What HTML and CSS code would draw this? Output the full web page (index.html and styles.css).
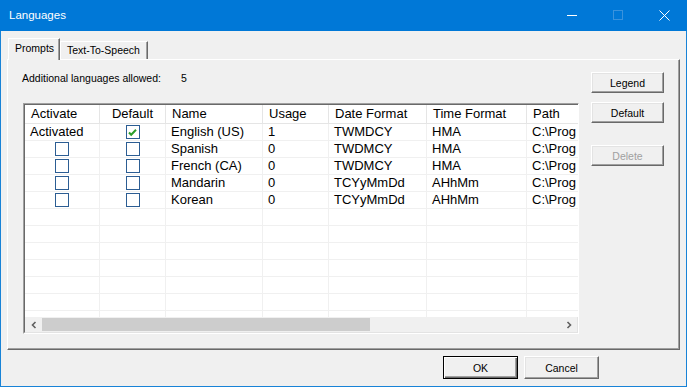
FILE: index.html
```html
<!DOCTYPE html>
<html lang="en">
<head>
    <meta charset="UTF-8">
    <title>Languages</title>
    <link rel="stylesheet" href="styles.css">
</head>
<body>
<div class="window">
    <div class="titlebar">
        <span class="title">Languages</span>
        <div class="caption">
            <span class="cap-btn"><svg width="10" height="10" viewBox="0 0 10 10"><path d="M0 5.5h10" stroke="#fff" stroke-width="1"/></svg></span>
            <span class="cap-btn"><svg width="10" height="10" viewBox="0 0 10 10"><rect x="0.5" y="0.5" width="9" height="9" fill="none" stroke="#3a93dd" stroke-width="1"/></svg></span>
            <span class="cap-btn"><svg width="11" height="11" viewBox="0 0 11 11"><path d="M0.5 0.5l10 10M10.5 0.5l-10 10" stroke="#fff" stroke-width="1"/></svg></span>
        </div>
    </div>

    <div class="client">
        <div class="tabs">
            <div class="tab active">Prompts</div>
            <div class="tab">Text-To-Speech</div>
        </div>

        <div class="panel">
            <div class="panel-main">
                <div class="allowed">
                    <span class="allowed-label">Additional languages allowed:</span>
                    <span class="allowed-count">5</span>
                </div>

                <div class="listview">
                    <div class="grid">
                        <div class="row head">
                            <div class="cell">Activate</div>
                            <div class="cell center">Default</div>
                            <div class="cell">Name</div>
                            <div class="cell">Usage</div>
                            <div class="cell">Date Format</div>
                            <div class="cell">Time Format</div>
                            <div class="cell">Path</div>
                        </div>
                        <div class="row">
                            <div class="cell">Activated</div>
                            <div class="cell center"><span class="check on"><svg width="11" height="11" viewBox="0 0 11 11"><path d="M2 5.5l2.2 2.3L9 2.8" fill="none" stroke="#2a9d2a" stroke-width="2"/></svg></span></div>
                            <div class="cell">English (US)</div>
                            <div class="cell">1</div>
                            <div class="cell">TWMDCY</div>
                            <div class="cell">HMA</div>
                            <div class="cell">C:\Prog</div>
                        </div>
                        <div class="row">
                            <div class="cell center"><span class="check"></span></div>
                            <div class="cell center"><span class="check"></span></div>
                            <div class="cell">Spanish</div>
                            <div class="cell">0</div>
                            <div class="cell">TWDMCY</div>
                            <div class="cell">HMA</div>
                            <div class="cell">C:\Prog</div>
                        </div>
                        <div class="row">
                            <div class="cell center"><span class="check"></span></div>
                            <div class="cell center"><span class="check"></span></div>
                            <div class="cell">French (CA)</div>
                            <div class="cell">0</div>
                            <div class="cell">TWDMCY</div>
                            <div class="cell">HMA</div>
                            <div class="cell">C:\Prog</div>
                        </div>
                        <div class="row">
                            <div class="cell center"><span class="check"></span></div>
                            <div class="cell center"><span class="check"></span></div>
                            <div class="cell">Mandarin</div>
                            <div class="cell">0</div>
                            <div class="cell">TCYyMmDd</div>
                            <div class="cell">AHhMm</div>
                            <div class="cell">C:\Prog</div>
                        </div>
                        <div class="row">
                            <div class="cell center"><span class="check"></span></div>
                            <div class="cell center"><span class="check"></span></div>
                            <div class="cell">Korean</div>
                            <div class="cell">0</div>
                            <div class="cell">TCYyMmDd</div>
                            <div class="cell">AHhMm</div>
                            <div class="cell">C:\Prog</div>
                        </div>
                        <div class="row"><div class="cell"></div><div class="cell"></div><div class="cell"></div><div class="cell"></div><div class="cell"></div><div class="cell"></div><div class="cell"></div></div>
                        <div class="row"><div class="cell"></div><div class="cell"></div><div class="cell"></div><div class="cell"></div><div class="cell"></div><div class="cell"></div><div class="cell"></div></div>
                        <div class="row"><div class="cell"></div><div class="cell"></div><div class="cell"></div><div class="cell"></div><div class="cell"></div><div class="cell"></div><div class="cell"></div></div>
                        <div class="row"><div class="cell"></div><div class="cell"></div><div class="cell"></div><div class="cell"></div><div class="cell"></div><div class="cell"></div><div class="cell"></div></div>
                        <div class="row"><div class="cell"></div><div class="cell"></div><div class="cell"></div><div class="cell"></div><div class="cell"></div><div class="cell"></div><div class="cell"></div></div>
                        <div class="row"><div class="cell"></div><div class="cell"></div><div class="cell"></div><div class="cell"></div><div class="cell"></div><div class="cell"></div><div class="cell"></div></div>
                        <div class="row"><div class="cell"></div><div class="cell"></div><div class="cell"></div><div class="cell"></div><div class="cell"></div><div class="cell"></div><div class="cell"></div></div>
                    </div>

                    <div class="hscroll">
                        <span class="arrow"><svg width="8" height="8" viewBox="0 0 8 8"><path d="M5.5 1L2.5 4l3 3" fill="none" stroke="#606060" stroke-width="1.6"/></svg></span>
                        <div class="track"><div class="thumb" style="width: 328px"></div></div>
                        <span class="arrow"><svg width="8" height="8" viewBox="0 0 8 8"><path d="M2.5 1l3 3-3 3" fill="none" stroke="#606060" stroke-width="1.6"/></svg></span>
                    </div>
                </div>
            </div>

            <div class="side">
                <button class="btn">Legend</button>
                <button class="btn">Default</button>
                <button class="btn disabled gap">Delete</button>
            </div>
        </div>

        <div class="footer">
            <button class="btn big default">OK</button>
            <button class="btn big">Cancel</button>
        </div>
    </div>
</div>
</body>
</html>
```

FILE: styles.css
```css
* {
    box-sizing: border-box;
}
body {
    margin: 0;
    background-color: #f0f0f0;
    font-family: "Liberation Sans", Arial, sans-serif;
    font-size: 10.5px;
    color: #000;
}
.window {
    width: 687px;
    height: 387px;
    border: 1px solid #1883d7;
    border-top: none;
    background-color: #f0f0f0;
    display: flex;
    flex-direction: column;
}
.titlebar {
    height: 31px;
    margin: 0 -1px;
    background-color: #0078d7;
    display: flex;
    align-items: center;
    flex-shrink: 0;
}
.title {
    color: #fff;
    font-size: 11.5px;
    padding-left: 9px;
    flex: 1;
    margin-top: -1px;
}
.caption {
    display: flex;
    height: 30px;
    align-self: flex-start;
}
.cap-btn {
    width: 46px;
    height: 30px;
    display: flex;
    align-items: center;
    justify-content: center;
}
.cap-btn svg {
    display: block;
}

.client {
    flex: 1;
    padding-top: 7px;
}
.tabs {
    display: flex;
    align-items: flex-end;
    height: 21px;
    padding-left: 7px;
    position: relative;
    z-index: 1;
}
.tab {
    height: 18px;
    padding: 0 6px;
    line-height: 17px;
    border-top: 1px solid #fff;
    border-left: 1px solid #fff;
    border-right: 1px solid #696969;
    box-shadow: inset -1px 0 #a0a0a0;
    background-color: #f0f0f0;
}
.tab.active {
    height: 22px;
    width: 52px;
    margin-bottom: -1px;
    line-height: 19px;
    padding-left: 6px;
}
.tab + .tab {
    width: 88px;
}

.panel {
    width: 673px;
    height: 291px;
    margin-left: 6px;
    border-top: 1px solid #fff;
    border-left: 1px solid #fff;
    border-right: 1px solid #696969;
    border-bottom: 1px solid #696969;
    box-shadow: inset -1px -1px #a0a0a0;
    padding: 12px 0 0 15px;
    display: flex;
}
.panel-main {
    width: 556px;
    display: flex;
    flex-direction: column;
}
.allowed {
    height: 13px;
    line-height: 13px;
    display: flex;
}
.allowed-label {
    margin-left: -1px;
    width: 159px;
}

.listview {
    margin-top: 18px;
    height: 231px;
    border-top: 1px solid #a0a0a0;
    border-left: 1px solid #a0a0a0;
    border-right: 1px solid #fff;
    border-bottom: 1px solid #fff;
    display: flex;
    flex-direction: column;
    background-color: #fff;
    font-size: 13px;
}
.grid {
    flex: 1;
    overflow: hidden;
    border-top: 1px solid #696969;
    border-left: 1px solid #696969;
}
.row {
    display: grid;
    grid-template-columns: 75px 66px 97px 66px 98px 100px 51px;
    height: 17px;
    border-bottom: 1px solid #f0f0f0;
}
.row.head {
    height: 19px;
    border-bottom: 1px solid #e5e5e5;
}
.cell {
    border-right: 1px solid #f0f0f0;
    padding: 0 5px;
    line-height: 16px;
    white-space: nowrap;
    display: flex;
    align-items: center;
}
.cell:last-child {
    border-right: none;
    padding-right: 0;
}
.head .cell {
    border-right-color: #e5e5e5;
    line-height: 18px;
    padding-left: 6px;
}
.cell.center {
    justify-content: center;
    padding: 0;
}
.check {
    width: 14px;
    height: 14px;
    border: 1px solid #2c5d93;
    background-color: #fff;
    display: flex;
    align-items: center;
    justify-content: center;
}
.check svg {
    display: block;
}

.hscroll {
    height: 16px;
    display: flex;
    background-color: #f0f0f0;
    border-left: 1px solid #696969;
    border-bottom: 1px solid #e3e3e3;
    border-right: 1px solid #e3e3e3;
}
.arrow {
    width: 17px;
    display: flex;
    align-items: center;
    justify-content: center;
}
.track {
    flex: 1;
    padding: 1px 0;
}
.thumb {
    height: 100%;
    background-color: #cdcdcd;
}

.side {
    margin-left: 12px;
    display: flex;
    flex-direction: column;
    gap: 9px;
}
.btn {
    font-family: "Liberation Sans", Arial, sans-serif;
    font-size: 10.5px;
    color: #000;
    width: 73px;
    height: 21px;
    padding: 0;
    background-color: #f0f0f0;
    border-top: 1px solid #fff;
    border-left: 1px solid #fff;
    border-right: 1px solid #696969;
    border-bottom: 1px solid #696969;
    box-shadow: inset -1px -1px #a0a0a0, inset 1px 1px #e3e3e3;
}
.btn.disabled {
    color: #a0a0a0;
}
.btn.gap {
    margin-top: 13px;
}

.footer {
    display: flex;
    justify-content: flex-end;
    gap: 6px;
    padding-right: 87px;
    margin-top: 6px;
}
.btn.big {
    width: 75px;
    height: 23px;
}
.btn.default {
    border: 1px solid #000;
    box-shadow: inset 1px 1px #fff, inset -1px -1px #696969, inset -2px -2px #a0a0a0;
}
```
